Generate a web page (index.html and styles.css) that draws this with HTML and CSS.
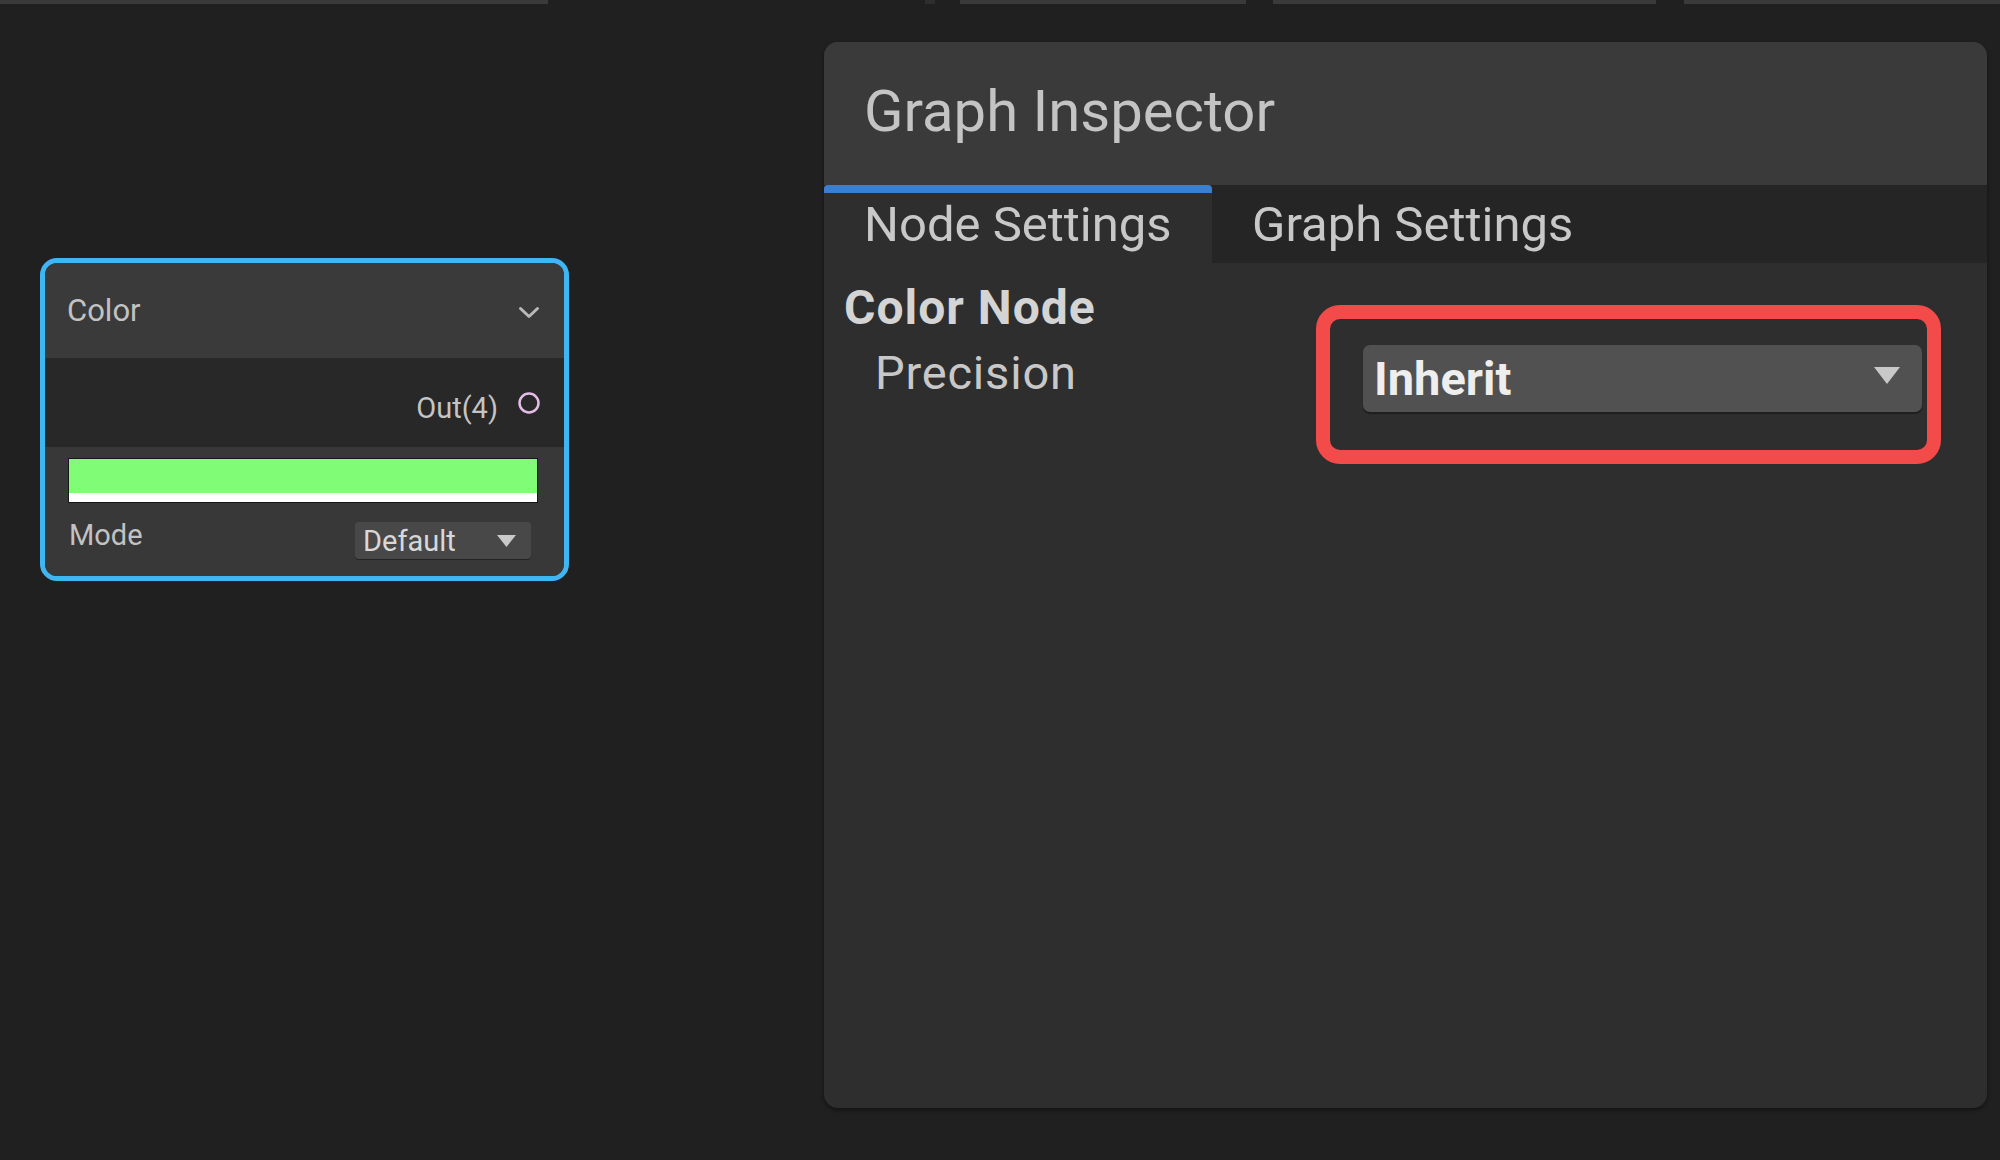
FILE: index.html
```html
<!DOCTYPE html>
<html>
<head>
<meta charset="utf-8">
<link rel="stylesheet" href="styles.css">
</head>
<body>
<div class="topbar">
  <div class="seg seg-a"></div>
  <div class="seg seg-b"></div>
  <div class="seg seg-c"></div>
  <div class="seg seg-d"></div>
  <div class="seg seg-e"></div>
</div>
<div class="workspace">
  <div class="graph">
    <div class="node">
      <div class="node-header">
        <span class="node-title">Color</span>
        <svg class="chevron" width="22" height="13" viewBox="0 0 22 13"><path d="M2.5 2.5 L11 10.5 L19.5 2.5" fill="none" stroke="#b9b9b9" stroke-width="3" stroke-linecap="round" stroke-linejoin="round"/></svg>
      </div>
      <div class="node-out">
        <span class="out-label">Out(4)</span>
        <svg class="port" width="24" height="24" viewBox="0 0 24 24"><circle cx="12" cy="12" r="9.5" fill="none" stroke="#e3bde6" stroke-width="2.5"/></svg>
      </div>
      <div class="node-body">
        <div class="swatch"><div class="swatch-color"></div><div class="swatch-alpha"></div></div>
        <div class="mode-row">
          <span class="mode-label">Mode</span>
          <div class="mini-drop">
            <span>Default</span>
            <svg width="19" height="12" viewBox="0 0 19 12"><path d="M0 0 L19 0 L9.5 12 Z" fill="#c9c9c9"/></svg>
          </div>
        </div>
      </div>
    </div>
  </div>
  <div class="inspector">
    <div class="insp-header"><span class="insp-title">Graph Inspector</span></div>
    <div class="tabs">
      <div class="tab active"><span>Node Settings</span></div>
      <div class="tab"><span>Graph Settings</span></div>
    </div>
    <div class="content">
      <div class="section-title">Color Node</div>
      <div class="row">
        <span class="row-label">Precision</span>
        <div class="dropdown">
          <span class="drop-value">Inherit</span>
          <svg class="drop-arrow" width="26" height="17" viewBox="0 0 26 17"><path d="M0 0 L26 0 L13 17 Z" fill="#c8c8c8"/></svg>
        </div>
      </div>
    </div>
  </div>
</div>
</body>
</html>
```
FILE: styles.css
```css
html, body {
  margin: 0;
  padding: 0;
}
body {
  width: 2000px;
  height: 1160px;
  overflow: hidden;
  background: #202020;
  font-family: Roboto, "Liberation Sans", sans-serif;
}

.topbar {
  display: flex;
  height: 5px;
}
.seg {
  height: 4px;
  background: #3a3a3a;
}
.seg-a { width: 548px; }
.seg-b { width: 10px; margin-left: 377px; background: #2e2e2e; }
.seg-c { width: 286px; margin-left: 25px; }
.seg-d { width: 383px; margin-left: 27px; }
.seg-e { width: 316px; margin-left: 28px; }

.workspace {
  display: flex;
  height: 1155px;
}
.graph {
  flex: 0 0 824px;
  position: relative;
}

/* Node */
.node {
  position: absolute;
  left: 40px;
  top: 253px;
  width: 519px;
  border: 5px solid #3db6f2;
  border-radius: 17px;
  overflow: hidden;
  background: #383838;
}
.node-header {
  height: 95px;
  background: #3a3a3a;
  display: flex;
  align-items: center;
  justify-content: space-between;
  padding: 0 24px 0 22px;
}
.node-title {
  font-size: 31px;
  color: #c2c2c2;
  line-height: 1;
}
.chevron {
  margin-top: 4px;
}
.node-out {
  height: 89px;
  background: #282828;
  display: flex;
  align-items: center;
  justify-content: flex-end;
  padding-right: 23px;
}
.out-label {
  font-size: 29px;
  color: #c4c4c4;
  line-height: 1;
  margin-right: 19px;
  margin-top: 11px;
}
.node-body {
  height: 129px;
  background: #383838;
  padding: 11px 26px 0 23px;
  box-sizing: border-box;
}
.swatch {
  width: 468px;
  border: 1px solid #161616;
  display: flex;
  flex-direction: column;
}
.swatch-color {
  height: 34px;
  background: #80fc77;
}
.swatch-alpha {
  height: 9px;
  background: #ffffff;
}
.mode-row {
  display: flex;
  align-items: center;
  justify-content: space-between;
  margin-top: 19px;
}
.mode-label {
  font-size: 29px;
  color: #c2c2c2;
  line-height: 1;
  margin-left: 1px;
  margin-top: -10px;
}
.mini-drop {
  width: 176px;
  height: 37px;
  box-sizing: border-box;
  background: #484848;
  border-radius: 4px;
  box-shadow: 0 1px 0 #232323;
  display: flex;
  align-items: center;
  justify-content: space-between;
  padding: 0 15px 0 8px;
  margin-right: 7px;
  font-size: 29px;
  color: #d8d8d8;
}

/* Inspector */
.inspector {
  flex: 0 0 1163px;
  margin-top: 37px;
  height: 1066px;
  background: #2e2e2e;
  border-radius: 14px;
  overflow: hidden;
  box-shadow: 0 2px 4px rgba(0,0,0,0.45);
  display: flex;
  flex-direction: column;
}
.insp-header {
  height: 143px;
  flex: 0 0 143px;
  background: #3a3a3a;
  display: flex;
  align-items: center;
  padding: 0 0 6px 40px;
  box-sizing: border-box;
}
.insp-title {
  font-size: 58px;
  line-height: 1;
  color: #c4c4c4;
}
.tabs {
  flex: 0 0 78px;
  display: flex;
  background: #252525;
}
.tab {
  display: flex;
  align-items: center;
  padding: 0 40px 8px 40px;
  box-sizing: border-box;
  font-size: 49px;
  line-height: 1;
  color: #c8c8c8;
  border-top: 8px solid transparent;
}
.tab.active {
  width: 388px;
  background: #2e2e2e;
  border-top: 8px solid #3b7fd0;
  border-top-left-radius: 4px;
  border-top-right-radius: 4px;
}
.content {
  padding: 22px 20px 0 20px;
}
.section-title {
  font-size: 48px;
  font-weight: bold;
  letter-spacing: 1px;
  line-height: 1;
  color: #d4d4d4;
  margin-top: -1px;
}
.row {
  display: flex;
  align-items: flex-start;
  margin-top: 13px;
}
.row-label {
  font-size: 47px;
  letter-spacing: 0.8px;
  line-height: 1;
  color: #c8c8c8;
  padding-left: 31px;
  margin-top: 4px;
}
.dropdown {
  position: relative;
  margin-left: auto;
  margin-right: 45px;
  width: 559px;
  height: 67px;
  box-sizing: border-box;
  background: #515151;
  border-radius: 7px;
  box-shadow: 0 2px 1px #1f1f1f;
  display: flex;
  align-items: center;
  justify-content: space-between;
  padding: 0 22px 0 11px;
}
.dropdown::after {
  content: "";
  position: absolute;
  left: -47px;
  right: -19px;
  top: -40px;
  bottom: -52px;
  border: 14px solid #f34a4a;
  border-radius: 24px;
}
.drop-value {
  font-size: 47px;
  font-weight: bold;
  line-height: 1;
  color: #eeeeee;
}
.drop-arrow {
  margin-top: -6px;
}
```
